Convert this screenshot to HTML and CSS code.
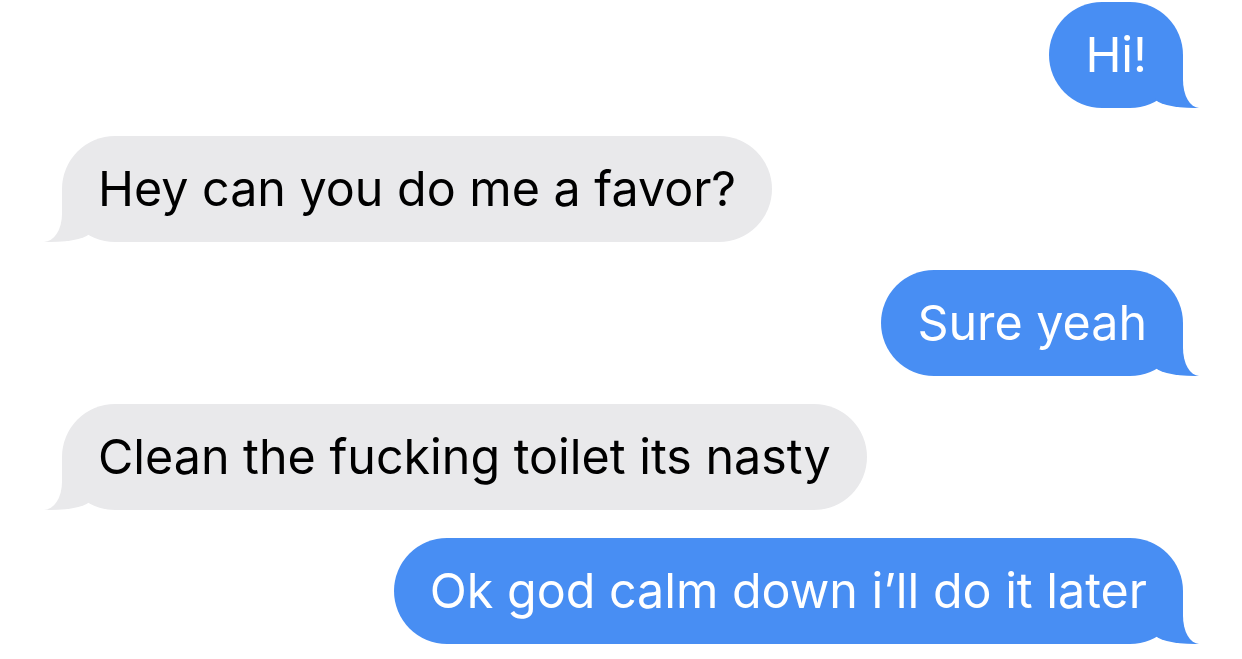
FILE: index.html
```html
<!DOCTYPE html>
<html lang="en">
<head>
<meta charset="utf-8">
<title>Messages</title>
<link rel="stylesheet" href="styles.css">
</head>
<body>
<div class="thread">
  <div class="bubble sent">Hi!</div>
  <div class="bubble received">Hey can you do me a favor?</div>
  <div class="bubble sent">Sure yeah</div>
  <div class="bubble received">Clean the fucking toilet its nasty</div>
  <div class="bubble sent">Ok god calm down i’ll do it later</div>
</div>
</body>
</html>
```
FILE: styles.css
```css
html, body {
  margin: 0;
  padding: 0;
  background: #ffffff;
}

.thread {
  display: flex;
  flex-direction: column;
  gap: 28px;
  padding: 2px 59px 0 62px;
  font-family: Inter, "Liberation Sans", Arial, sans-serif;
}

.bubble {
  position: relative;
  font-size: 48.4px;
  line-height: 58px;
  padding: 24px 36px;
  border-radius: 53px;
  white-space: nowrap;
}

.sent {
  align-self: flex-end;
  background: #488ef3;
  color: #ffffff;
}

.received {
  align-self: flex-start;
  background: #e9e9eb;
  color: #000000;
}

.bubble::before,
.bubble::after {
  content: "";
  position: absolute;
  bottom: 0;
}

.sent::before {
  right: -16px;
  width: 44px;
  height: 53px;
  background: #488ef3;
  border-bottom-left-radius: 40px 10px;
}

.sent::after {
  right: -40px;
  width: 40px;
  height: 54px;
  background: #ffffff;
  border-bottom-left-radius: 16px 28px;
}

.received::before {
  left: -18px;
  width: 46px;
  height: 53px;
  background: #e9e9eb;
  border-bottom-right-radius: 40px 10px;
}

.received::after {
  left: -40px;
  width: 40px;
  height: 54px;
  background: #ffffff;
  border-bottom-right-radius: 18px 28px;
}
```
